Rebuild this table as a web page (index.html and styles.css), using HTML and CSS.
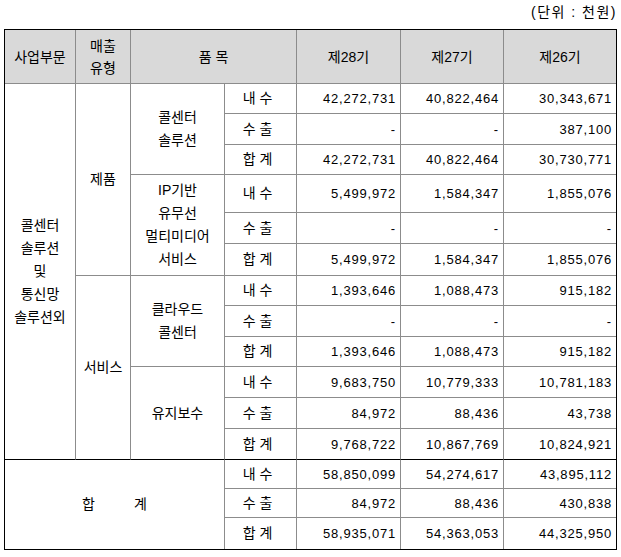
FILE: index.html
```html
<!DOCTYPE html>
<html lang="ko">
<head>
<meta charset="utf-8">
<title>매출 현황</title>
<link rel="stylesheet" href="styles.css">
</head>
<body>
<div class="unit">(단위 : 천원)</div>
<table class="sales">
  <colgroup>
    <col class="c1"><col class="c2"><col class="c3"><col class="c4"><col class="c5"><col class="c6"><col class="c7">
  </colgroup>
  <thead>
    <tr class="r54">
      <th>사업부문</th>
      <th>매출<br>유형</th>
      <th colspan="2">품 목</th>
      <th>제28기</th>
      <th>제27기</th>
      <th class="last">제26기</th>
    </tr>
  </thead>
  <tbody>
    <tr class="r30">
      <td rowspan="12" class="lbl gend">콜센터<br>솔루션<br>및<br>통신망<br>솔루션외</td>
      <td rowspan="6" class="lbl">제품</td>
      <td rowspan="3" class="lbl">콜센터<br>솔루션</td>
      <td class="sub">내 수</td>
      <td class="num">42,272,731</td><td class="num">40,822,464</td><td class="num last">30,343,671</td>
    </tr>
    <tr class="r31">
      <td class="sub">수 출</td>
      <td class="num">-</td><td class="num">-</td><td class="num last">387,100</td>
    </tr>
    <tr class="r30">
      <td class="sub">합 계</td>
      <td class="num">42,272,731</td><td class="num">40,822,464</td><td class="num last">30,730,771</td>
    </tr>
    <tr class="r38">
      <td rowspan="3" class="lbl">IP기반<br>유무선<br>멀티미디어<br>서비스</td>
      <td class="sub">내 수</td>
      <td class="num">5,499,972</td><td class="num">1,584,347</td><td class="num last">1,855,076</td>
    </tr>
    <tr class="r31">
      <td class="sub">수 출</td>
      <td class="num">-</td><td class="num">-</td><td class="num last">-</td>
    </tr>
    <tr class="r32">
      <td class="sub">합 계</td>
      <td class="num">5,499,972</td><td class="num">1,584,347</td><td class="num last">1,855,076</td>
    </tr>
    <tr class="r30">
      <td rowspan="6" class="lbl gend">서비스</td>
      <td rowspan="3" class="lbl">클라우드<br>콜센터</td>
      <td class="sub">내 수</td>
      <td class="num">1,393,646</td><td class="num">1,088,473</td><td class="num last">915,182</td>
    </tr>
    <tr class="r31">
      <td class="sub">수 출</td>
      <td class="num">-</td><td class="num">-</td><td class="num last">-</td>
    </tr>
    <tr class="r30">
      <td class="sub">합 계</td>
      <td class="num">1,393,646</td><td class="num">1,088,473</td><td class="num last">915,182</td>
    </tr>
    <tr class="r31">
      <td rowspan="3" class="lbl gend">유지보수</td>
      <td class="sub">내 수</td>
      <td class="num">9,683,750</td><td class="num">10,779,333</td><td class="num last">10,781,183</td>
    </tr>
    <tr class="r31">
      <td class="sub">수 출</td>
      <td class="num">84,972</td><td class="num">88,436</td><td class="num last">43,738</td>
    </tr>
    <tr class="r31">
      <td class="sub gend">합 계</td>
      <td class="num gend">9,768,722</td><td class="num gend">10,867,769</td><td class="num last gend">10,824,921</td>
    </tr>
    <tr class="r29">
      <td rowspan="3" colspan="3" class="lbl total end"><span class="tw">합</span><span class="tw">계</span></td>
      <td class="sub">내 수</td>
      <td class="num">58,850,099</td><td class="num">54,274,617</td><td class="num last">43,895,112</td>
    </tr>
    <tr class="r29">
      <td class="sub">수 출</td>
      <td class="num">84,972</td><td class="num">88,436</td><td class="num last">430,838</td>
    </tr>
    <tr class="r31">
      <td class="sub end">합 계</td>
      <td class="num end">58,935,071</td><td class="num end">54,363,053</td><td class="num last end">44,325,950</td>
    </tr>
  </tbody>
</table>
</body>
</html>
```

FILE: styles.css
```css
html, body {
  margin: 0;
  padding: 0;
  background: #ffffff;
}
body {
  padding: 0 4px;
  font-family: "Liberation Sans", "Noto Sans CJK KR", sans-serif;
  font-size: 14px;
  color: #000000;
}
.unit {
  height: 29px;
  box-sizing: border-box;
  padding: 3px 0 0 0;
  line-height: 18px;
  text-align: right;
  width: 613px;
  letter-spacing: 1.5px;
}
.sales {
  border-collapse: separate;
  border-spacing: 0;
  table-layout: fixed;
  width: 613px;
  border: 1px solid #000000;
}
.c1 { width: 71px; }
.c2 { width: 55px; }
.c3 { width: 94px; }
.c4 { width: 72px; }
.c5 { width: 104px; }
.c6 { width: 103px; }
.c7 { width: 112px; }

.sales th,
.sales td {
  padding: 0;
  border-right: 1px solid #8c8c8c;
  border-bottom: 1px solid #8c8c8c;
  text-align: center;
  vertical-align: middle;
  line-height: 23px;
  font-weight: normal;
  box-sizing: border-box;
}
.sales th {
  background: #d9d9d9;
  line-height: 22px;
}
.sales .last { border-right: none; }
.sales .gend { border-bottom-color: #000000; }
.sales .end { border-bottom: none; }
.sales .num {
  font-size: 13px;
  text-align: right;
  padding-right: 4px;
  letter-spacing: 0.8px;
}
.sales .sub {
  padding-right: 6px;
}
.tw { display: inline-block; }
.tw + .tw { margin-left: 39px; }

.r54 { height: 54px; }
.r29 { height: 29px; }
.r30 { height: 30px; }
.r31 { height: 31px; }
.r32 { height: 32px; }
.r38 { height: 38px; }
```
